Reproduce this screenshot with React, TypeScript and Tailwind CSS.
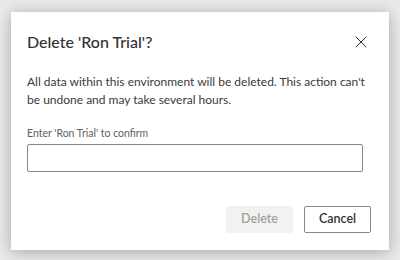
import { X } from "lucide-react";

export default function App() {
  return (
    <div
      className="w-[400px] h-[260px] bg-[#e9e9e9] pt-[12px] pl-[11px]"
      style={{ fontFamily: 'Lato, "Open Sans", sans-serif' }}
    >
      <div className="w-[378px] h-[238px] bg-white shadow-[0_2px_14px_rgba(0,0,0,0.28)] flex flex-col pl-[16px] pr-[18px]">
        <div className="flex items-center justify-between pt-[18px]">
          <h1 className="text-[16px] leading-[24px] font-medium text-[#323130]">Delete 'Ron Trial'?</h1>
          <button className="w-[24px] h-[24px] flex items-center justify-center text-[#323130] -mr-[2px]">
            <X size={20} strokeWidth={1.2} />
          </button>
        </div>
        <p className="mt-[19px] text-[12px] leading-[18px] text-[#3b3a39] pr-[4px]">
          All data within this environment will be deleted. This action can't be undone and may take several hours.
        </p>
        <label className="mt-[17px] text-[10.5px] leading-[14px] text-[#605e5c]">Enter 'Ron Trial' to confirm</label>
        <input className="mt-[4px] w-[336px] h-[28px] border border-[#8a8886] rounded-[2px] outline-none" />
        <div className="mt-auto mb-[17px] flex justify-end gap-[11px]">
          <button className="w-[67px] h-[27px] bg-[#f3f2f1] text-[#a19f9d] text-[12.5px] font-semibold rounded-[2px]">Delete</button>
          <button className="w-[67px] h-[27px] bg-white border border-[#8a8886] text-[#323130] text-[12.5px] font-semibold rounded-[2px]">Cancel</button>
        </div>
      </div>
    </div>
  );
}
